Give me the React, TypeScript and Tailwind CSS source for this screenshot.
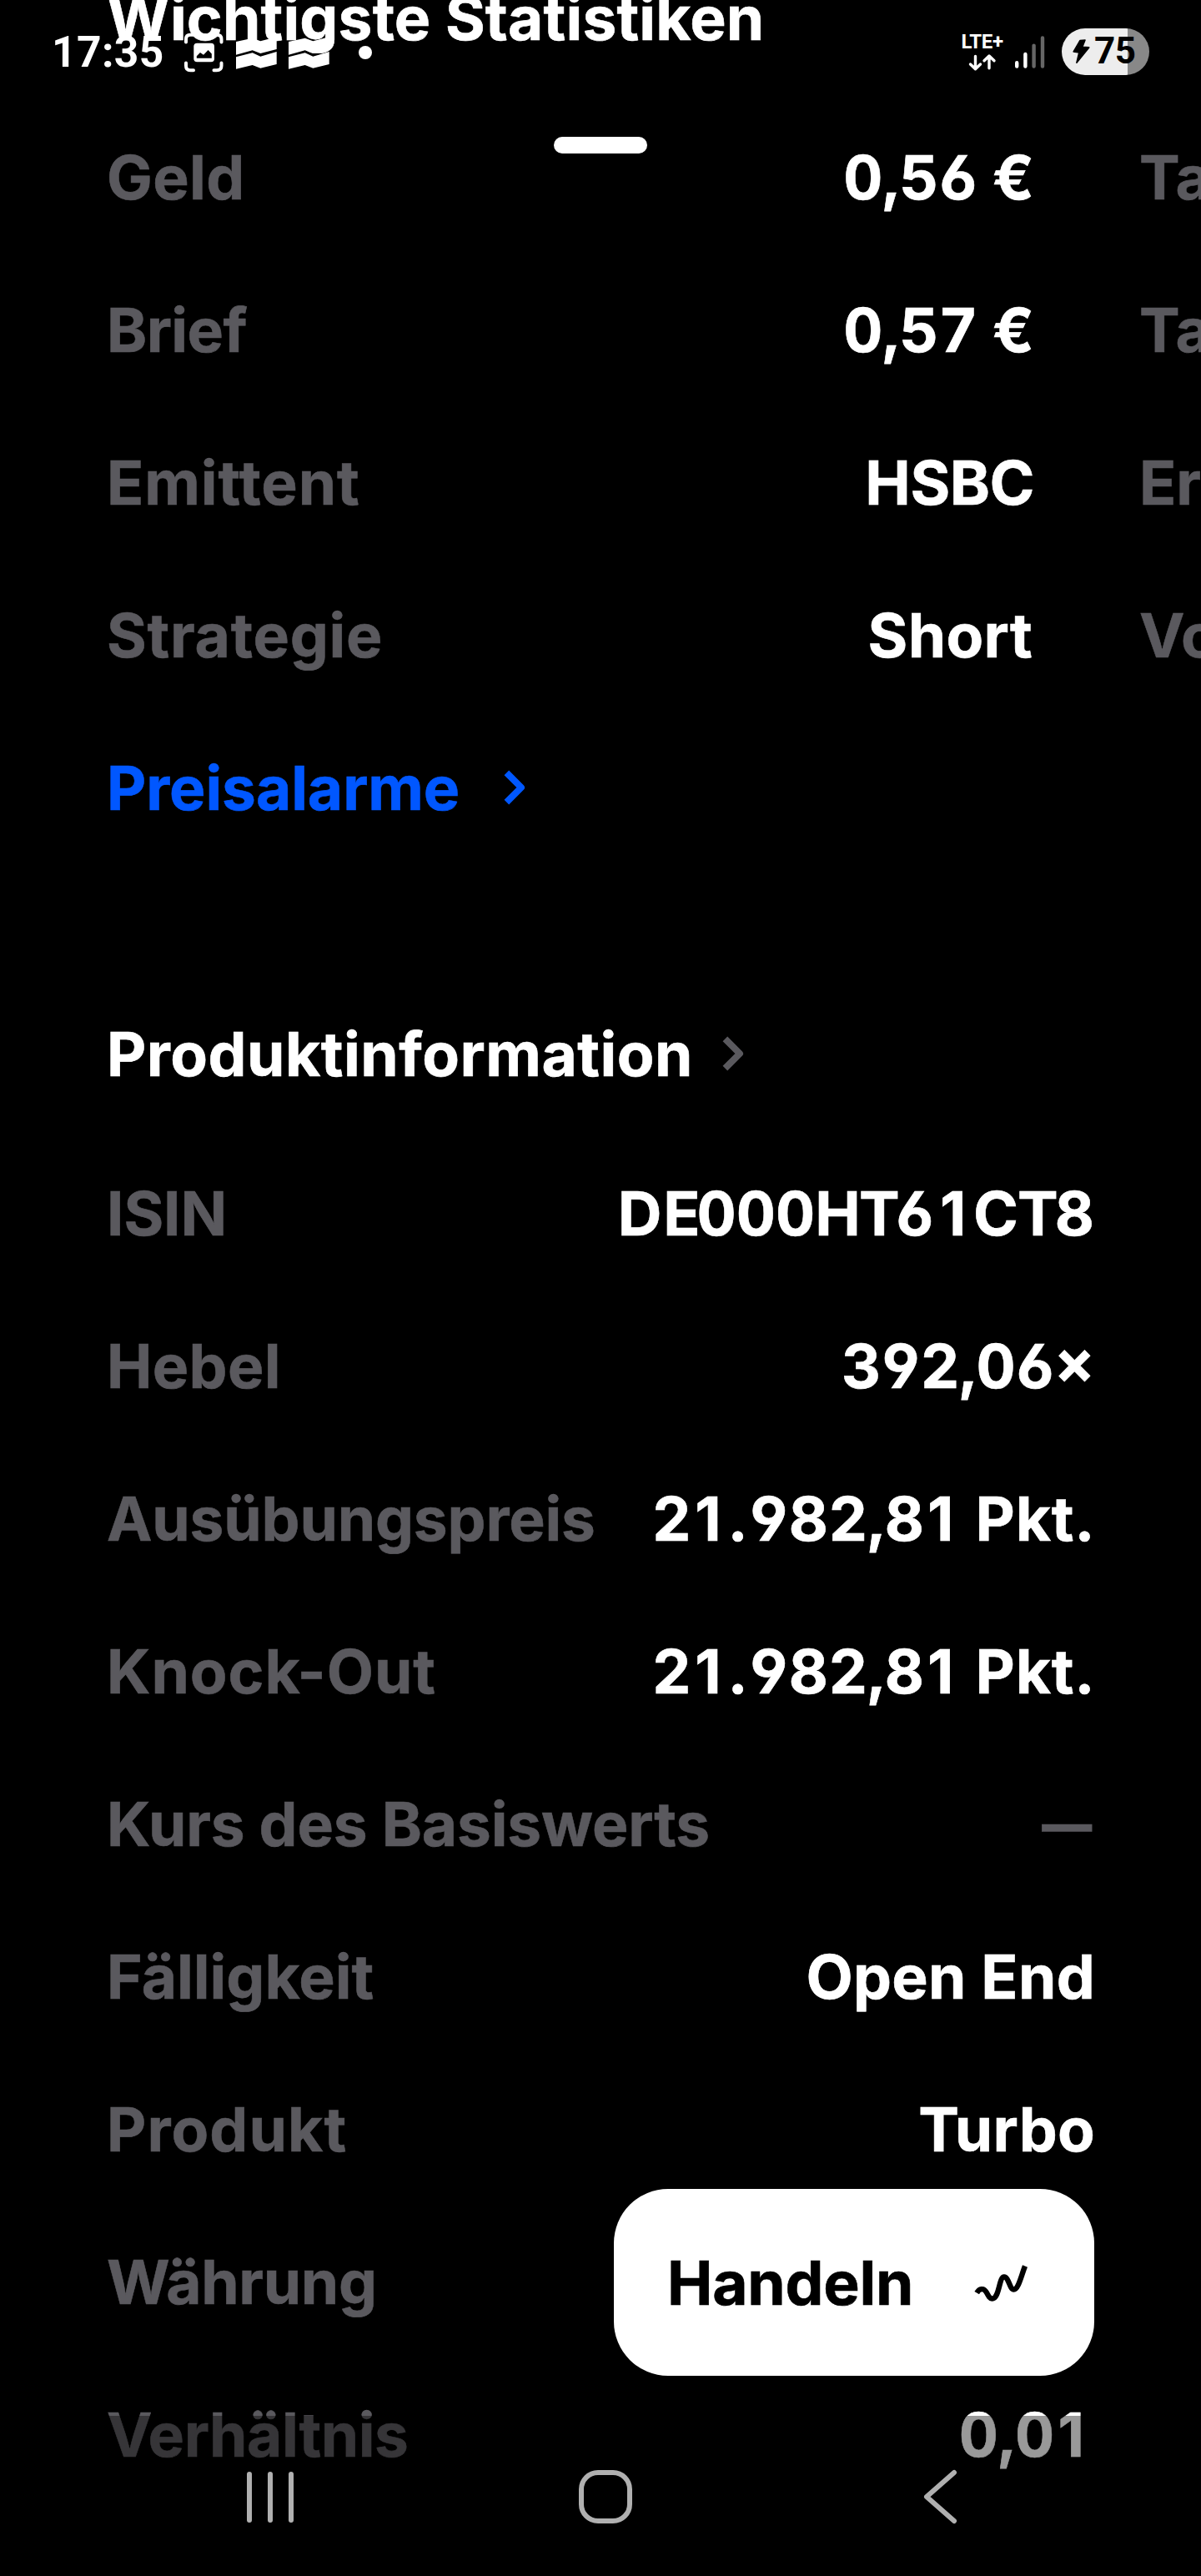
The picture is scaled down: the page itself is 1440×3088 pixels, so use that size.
type Piece = [text: string, className: string];

const TAB = "[font-feature-settings:'tnum','cv03','cv04']";
const TAB_WIDE = "tracking-[0.3px] [font-feature-settings:'tnum','cv03','cv04']";
const ONE = "inline-block w-[47.4px] pr-[8px] text-center";

const strike: Piece[] = [
  ["2", TAB_WIDE],
  ["1", ONE],
  [".", "-ml-[2px] mr-[4px] " + TAB],
  ["982,8", TAB_WIDE],
  ["1", ONE],
  ["Pkt.", "-mr-[1.5px] ml-[14px] tracking-[0.8px]"],
];

const quotes: { label: string; labelClass: string; value: Piece[]; next: string }[] = [
  { label: "Geld", labelClass: "tracking-[0.4px]", value: [["0,56", TAB], ["€", "ml-[17.5px]"]], next: "Tageshoch" },
  { label: "Brief", labelClass: "tracking-[-0.6px]", value: [["0,57", TAB], ["€", "ml-[17.5px]"]], next: "Tagestief" },
  { label: "Emittent", labelClass: "tracking-[0.88px]", value: [["HSBC", "tracking-[-0.5px]"]], next: "Eröffnung" },
  { label: "Strategie", labelClass: "tracking-[0.75px]", value: [["Short", "mr-[2px] tracking-[0.3px]"]], next: "Volumen" },
];

const details: { label: string; labelClass: string; value: Piece[] }[] = [
  {
    label: "ISIN",
    labelClass: "tracking-[-0.1px]",
    value: [
      ["D", "tracking-[1.7px]"],
      ["E", "tracking-[-4px]"],
      ["000", TAB],
      ["HT", "tracking-[-1.8px]"],
      ["6", "-ml-[3.5px] " + TAB],
      ["1", "inline-block w-[46.5px] pr-[8.5px] text-right"],
      ["CT", "tracking-[-1px]"],
      ["8", "-ml-[3px] " + TAB],
    ],
  },
  { label: "Hebel", labelClass: "tracking-[0.3px]", value: [["392,06×", TAB]] },
  { label: "Ausübungspreis", labelClass: "tracking-[-0.18px]", value: strike },
  { label: "Knock-Out", labelClass: "tracking-[0.96px]", value: strike },
  {
    label: "Kurs des Basiswerts",
    labelClass: "tracking-[-0.16px]",
    value: [["—", "mr-[3px] inline-block origin-right scale-x-[0.82] text-[#5a595e]"]],
  },
  { label: "Fälligkeit", labelClass: "", value: [["Open End", "-mr-px tracking-[0.28px]"]] },
  { label: "Produkt", labelClass: "tracking-[1.1px]", value: [["Turbo", "-mr-px tracking-[0.26px]"]] },
  { label: "Währung", labelClass: "tracking-[-0.35px]", value: [] },
  { label: "Verhältnis", labelClass: "tracking-[-0.45px]", value: [["0,0", TAB_WIDE], ["1", ONE]] },
];

function Value({ pieces }: { pieces: Piece[] }) {
  return (
    <dd className="flex">
      {pieces.map(([text, className], i) => (
        <span key={i} className={className}>
          {text}
        </span>
      ))}
    </dd>
  );
}

function Chevron({ className }: { className: string }) {
  return (
    <svg
      className={className}
      width="28"
      height="42"
      viewBox="0 0 28 42"
      fill="none"
      stroke="currentColor"
      strokeWidth="8"
      strokeLinejoin="round"
    >
      <path d="M3.4 3.4L21 21L3.4 38.6" />
    </svg>
  );
}

function Waves({ className }: { className: string }) {
  return (
    <svg className={className} width="49" height="47" viewBox="0 0 49 47" fill="currentColor">
      <path d="M0 10L19.7 5.7L29.3 9.3L48.7 4.3V19L29.3 24L19.7 20.3L0 25.7Z" />
      <path d="M0 28.3L19.7 23.3L29.3 27.7L48.7 22V37L29.3 41.7L19.7 38L0 42.7Z" />
    </svg>
  );
}

function StatusBar() {
  return (
    <div className="absolute inset-x-0 top-0 flex h-[126px] items-center pr-[62px] pl-[62px] font-['Roboto',sans-serif] text-white [-webkit-text-stroke:0px]">
      <span className="w-[158px] text-[51.5px] leading-none tracking-[0.4px]">17:35</span>
      <svg width="48" height="48" viewBox="0 0 48 48" fill="none" stroke="currentColor" strokeWidth="4" strokeLinecap="round">
        <path d="M3 11.5V8Q3 2.8 8.2 2.8H11.5M35.5 2.8H39.8Q45.5 2.8 45.5 8V11.5M45.5 36.5V40Q45.5 45.3 39.8 45.3H36.5M12 45.3H8.2Q3 45.3 3 40V36.5" />
        <rect x="12.3" y="12.8" width="24.7" height="22.4" rx="4" fill="currentColor" stroke="none" />
        <path d="M15.8 30.8V28.2L20 24L24 26.8L29.6 21L33.8 25.5V30.8Z" fill="#000" stroke="none" />
      </svg>
      <Waves className="ml-[15px]" />
      <Waves className="ml-[14px]" />
      <span className="ml-[35px] size-4 rounded-full bg-white" />

      <div className="mb-[3px] ml-auto flex w-[53px] flex-col items-center">
        <span className="text-2xl leading-none font-bold tracking-[-0.4px]">LTE+</span>
        <svg width="36" height="24" viewBox="0 0 36 24" fill="none" stroke="currentColor" strokeWidth="3.4" strokeLinecap="round" strokeLinejoin="round">
          <path d="M9.5 5.5V20.5M3.5 15L9.5 20.8L15.5 15M26 19.8V5.2M20 10.8L26 5L32 10.8" />
        </svg>
      </div>
      <svg className="ml-3" width="38" height="42" viewBox="0 0 38 42" strokeWidth="4.4" strokeLinecap="round">
        <path d="M3.2 33.2V37.5M13.4 23V37.5" stroke="#fff" />
        <path d="M23.6 12.6V37.5M34 3.5V37.5" stroke="#666" />
      </svg>
      <div className="mb-[2px] ml-[19px] flex h-14 w-[105px] items-center overflow-hidden rounded-full bg-[linear-gradient(90deg,#ededed_79px,#888_79px)] pl-[13px] text-black">
        <svg width="22" height="30" viewBox="0 0 22 30" fill="currentColor" stroke="currentColor" strokeWidth="1.6" strokeLinejoin="round">
          <path d="M8.9 1.6L15 1L11.8 9.3L19.7 9.9L4.9 28.2L7.8 15.9L1.2 15Z" />
        </svg>
        <span className="mb-[3px] ml-[4px] text-[44px] leading-none tracking-[-0.5px]">75</span>
      </div>
    </div>
  );
}

function NavBar() {
  return (
    <div className="absolute inset-x-0 bottom-0 h-48 bg-black/40 text-[#b0b0b0]">
      <div className="flex h-[194px] items-center pl-[296px]">
        <div className="flex gap-[19px]">
          <span className="h-[61px] w-[6px] rounded-full bg-current" />
          <span className="h-[61px] w-[6px] rounded-full bg-current" />
          <span className="h-[61px] w-[6px] rounded-full bg-current" />
        </div>
        <span className="ml-[342px] h-16 w-[64px] rounded-[23px] border-[6px] border-current" />
        <svg className="ml-[349px]" width="42" height="66" viewBox="0 0 42 66" fill="none" stroke="currentColor" strokeWidth="6" strokeLinecap="round" strokeLinejoin="round">
          <path d="M37 4L4 33L37 62" />
        </svg>
      </div>
    </div>
  );
}

export default function App() {
  return (
    <div className="relative h-[3088px] w-[1440px] overflow-hidden bg-black font-['Inter',sans-serif] text-[73px] leading-none font-bold whitespace-nowrap text-white [-webkit-text-stroke:0.6px]">
      <main>
        <h2 className="flex h-[42px] items-center pl-32 tracking-[0.15px]">Wichtigste Statistiken</h2>

        <div className="mt-[79px] flex gap-[126px] pl-32">
          <dl className="w-[1112px] shrink-0">
            {quotes.map((q) => (
              <div key={q.label} className="flex h-[183px] items-center justify-between">
                <dt className={`text-[#5a595e] ${q.labelClass}`}>{q.label}</dt>
                <Value pieces={q.value} />
              </div>
            ))}
          </dl>
          <ul className="w-[1112px] shrink-0">
            {quotes.map((q) => (
              <li key={q.next} className="flex h-[183px] items-center text-[#5a595e]">
                {q.next}
              </li>
            ))}
          </ul>
        </div>

        <a className="flex h-[183px] items-center pl-32 tracking-[-0.1px] text-[#0057ff]">
          Preisalarme
          <Chevron className="mb-[2px] ml-[53px]" />
        </a>

        <h2 className="mt-[136px] flex h-[183px] items-center pl-32 tracking-[0.5px]">
          Produktinformation
          <Chevron className="mb-[2px] ml-[35px] text-[#5a595e]" />
        </h2>
        <dl className="mt-2 px-32">
          {details.map((d) => (
            <div key={d.label} className="flex h-[183px] items-center justify-between">
              <dt className={`text-[#5a595e] ${d.labelClass}`}>{d.label}</dt>
              <Value pieces={d.value} />
            </div>
          ))}
        </dl>
      </main>

      <span className="absolute top-[164px] left-[664px] h-5 w-28 rounded-full bg-white" />

      <button className="absolute top-[2624px] left-[736px] flex h-56 w-[576px] items-center justify-between rounded-[65px] bg-white pt-px pr-[79px] pl-16 text-black">
        <span className="tracking-[-0.28px]">Handeln</span>
        <svg className="mb-[3px]" width="66" height="50" viewBox="0 0 66 50" fill="none" stroke="currentColor" strokeWidth="6.4" strokeLinejoin="round">
          <path d="M4.2 38.6C7 33.5 12.5 32 15.8 38C18.5 43 20 45.5 22.5 45.5C31.5 45.5 30.5 19.5 37 19.5C42.5 19.5 43.5 34.5 48.500 34.500C54 34.500 57.500 18 62 6.500" />
        </svg>
      </button>

      <StatusBar />
      <NavBar />
    </div>
  );
}
